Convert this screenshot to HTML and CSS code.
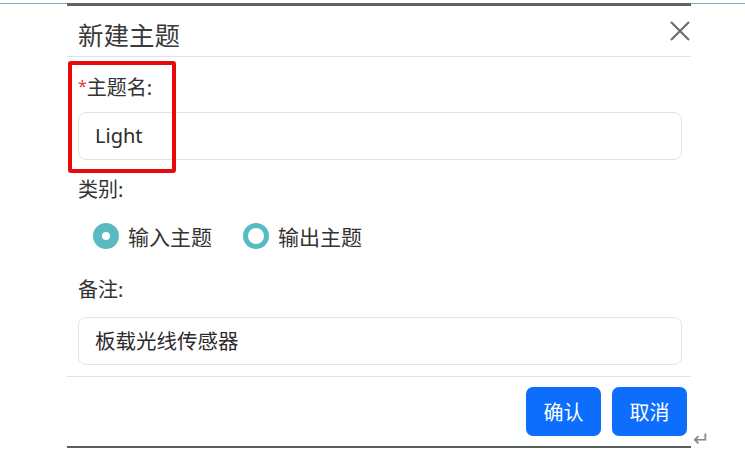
FILE: index.html
```html
<!DOCTYPE html>
<html lang="zh-CN">
<head>
    <meta charset="UTF-8">
    <meta name="viewport" content="width=device-width, initial-scale=1.0">
    <title>新建主题</title>
    <link rel="stylesheet" href="styles.css">
</head>
<body>
    <div class="edge"></div>
    <div class="page">
        <div class="modal">
            <div class="modal-header">
                <span class="modal-title">新建主题</span>
                <span class="close-btn">
                    <svg width="22" height="22" viewBox="0 0 22 22">
                        <path d="M2 2 L20 20 M20 2 L2 20" stroke="#6e6e6e" stroke-width="2.2" fill="none"/>
                    </svg>
                </span>
            </div>

            <div class="modal-body">
                <label class="form-label first"><span class="req">*</span>主题名:</label>
                <div class="form-control">Light</div>

                <label class="form-label">类别:</label>
                <div class="radio-group">
                    <span class="radio checked"></span><span class="radio-text">输入主题</span>
                    <span class="radio"></span><span class="radio-text">输出主题</span>
                </div>

                <label class="form-label third">备注:</label>
                <div class="form-control note">板载光线传感器</div>
            </div>

            <div class="modal-footer">
                <button class="btn">确认</button>
                <button class="btn">取消</button>
            </div>

            <!-- annotation box -->
            <div class="highlight"></div>
        </div>
        <span class="return-mark">↵</span>
    </div>
</body>
</html>
```

FILE: styles.css
```css
body {
    margin: 0;
    background-color: #fff;
    color: #333;
    font-family: "Noto Sans", "Noto Sans CJK SC", sans-serif;
}
.edge {
    margin-top: 3px;
    height: 1px;
    background-color: #6fb6bd;
}
.page {
    display: flex;
    align-items: flex-end;
    margin-left: 67px;
}
.modal {
    position: relative;
    width: 624px;
    margin-top: -1px;
    border-top: 3px solid #5e6262;
}
.modal-header {
    display: flex;
    align-items: center;
    justify-content: space-between;
    height: 46px;
    padding: 4px 0 0 11px;
    border-bottom: 1px solid #dee2e6;
}
.modal-title {
    font-size: 25.5px;
    color: #3a3a3a;
}
.close-btn {
    display: flex;
    margin-top: -4px;
}
.modal-body {
    padding: 0 9px 11px 11px;
}
.form-label {
    display: block;
    font-size: 20px;
    line-height: 30px;
    margin: 15px 0 9px;
    color: #333;
}
.form-label.first {
    margin-top: 14px;
}
.form-label.third {
    margin: 24px 0 12px;
}
.req {
    color: #e23a3a;
    font-size: 16px;
    vertical-align: 3px;
}
.form-control {
    box-sizing: border-box;
    height: 48px;
    padding: 0 16px;
    border: 1px solid #dfe2e6;
    border-radius: 8px;
    font-size: 20px;
    line-height: 46px;
    color: #2b2b2b;
}
.form-control.note {
    font-size: 20.5px;
}
.radio-group {
    display: flex;
    align-items: center;
    padding-left: 15px;
    margin-top: 16px;
}
.radio {
    box-sizing: border-box;
    width: 26px;
    height: 26px;
    border-radius: 50%;
    border: 5px solid #58bac3;
    background-color: #fff;
}
.radio.checked {
    border: 9px solid #58bac3;
}
.radio-text {
    font-size: 21px;
    margin: 0 31px 0 9px;
    color: #333;
}
.modal-footer {
    display: flex;
    justify-content: flex-end;
    gap: 11px;
    padding: 10px 4px 10px 0;
    border-top: 1px solid #dee2e6;
    border-bottom: 2px solid #55615f;
}
.btn {
    width: 75px;
    height: 49px;
    background-color: #0d6efd;
    color: white;
    border: none;
    border-radius: 7px;
    font-family: inherit;
    font-size: 20px;
    cursor: pointer;
}
.highlight {
    position: absolute;
    left: 1px;
    top: 55px;
    width: 100px;
    height: 104px;
    border: 4px solid #e80a0a;
    border-radius: 3px;
}
.return-mark {
    color: #888;
    font-size: 20px;
    line-height: normal;
    margin: 0 0 -4px 2px;
}
```
